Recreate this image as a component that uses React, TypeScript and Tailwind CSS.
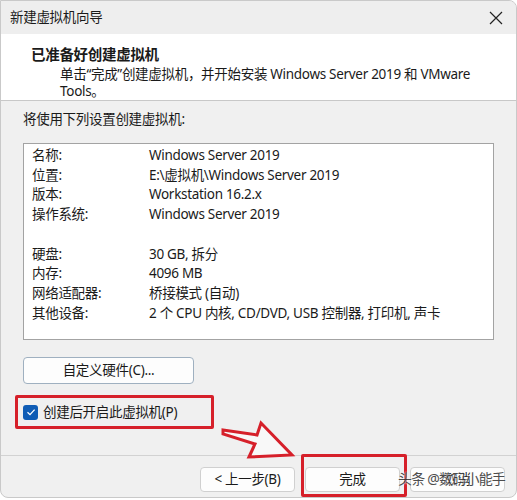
import React from "react";

const font = { fontFamily: '"Noto Sans", "Noto Sans CJK SC", sans-serif' };

const rows: [string, string][] = [
  ["名称:", "Windows Server 2019"],
  ["位置:", "E:\\虚拟机\\Windows Server 2019"],
  ["版本:", "Workstation 16.2.x"],
  ["操作系统:", "Windows Server 2019"],
  ["", ""],
  ["硬盘:", "30 GB, 拆分"],
  ["内存:", "4096 MB"],
  ["网络适配器:", "桥接模式 (自动)"],
  ["其他设备:", "2 个 CPU 内核, CD/DVD, USB 控制器, 打印机, 声卡"],
];

export default function App() {
  return (
    <div className="relative w-[517px] h-[500px] bg-white overflow-hidden text-[#1a1a1a] tracking-[-0.3px]" style={font}>
      <div className="flex flex-col w-[517px] h-[498px] border border-[#c9c9c9] rounded-b-[8px] rounded-tr-[8px] overflow-hidden bg-[#f0f0f0]">
        {/* title bar */}
        <div className="flex items-center justify-between h-[33px] shrink-0 bg-[#eeeeee] pl-[9px] pr-[12px]">
          <span className="text-[13.5px]">新建虚拟机向导</span>
          <svg width="14" height="14" viewBox="0 0 14 14" className="mr-[1px]">
            <path d="M1 1 L13 13 M13 1 L1 13" stroke="#222" strokeWidth="1.2" />
          </svg>
        </div>
        {/* header */}
        <div className="h-[67px] shrink-0 bg-white border-b border-[#c8c8c8] pl-[30px] pt-[8px]">
          <div className="text-[14.5px] font-bold leading-[24px]">已准备好创建虚拟机</div>
          <div className="pl-[29px] text-[13.5px] leading-[17px]">
            单击“完成”创建虚拟机，并开始安装 Windows Server 2019 和 VMware
            <br />
            Tools。
          </div>
        </div>
        {/* body */}
        <div className="flex-1 flex flex-col px-[22px]">
          <div className="mt-[8px] text-[13.5px] leading-[20px]">将使用下列设置创建虚拟机:</div>
          <div className="mt-[14px] h-[197px] bg-white border border-[#a3a3a3] pt-[1px] pl-[8px]">
            {rows.map((r, i) => (
              <div key={i} className="flex h-[19.75px] items-center text-[13.5px]">
                <span className="w-[117px] shrink-0">{r[0]}</span>
                <span>{r[1]}</span>
              </div>
            ))}
          </div>
          <div className="mt-[17px] w-[171px] h-[27px] rounded-[4px] border border-[#9fb0c0] bg-[#fdfdfd] flex items-center justify-center text-[13.5px]">
            自定义硬件(C)...
          </div>
          <div className="mt-[20px] flex items-center gap-[5px] h-[16px]">
            <div className="w-[15px] h-[15px] rounded-[3px] bg-[#0f5cb5] flex items-center justify-center">
              <svg width="10" height="10" viewBox="0 0 10 10">
                <path d="M1.5 5.2 L4 7.6 L8.6 2.6" stroke="white" strokeWidth="1.3" fill="none" />
              </svg>
            </div>
            <span className="text-[13.5px]">创建后开启此虚拟机(P)</span>
          </div>
        </div>
        {/* footer */}
        <div className="h-[42px] shrink-0 border-t border-[#d2d2d2] flex items-start justify-end gap-[10px] pr-[11px] pt-[11px]">
          <div className="w-[95px] h-[25px] rounded-[4px] border border-[#d0d0d0] bg-[#fdfdfd] flex items-center justify-center text-[13.5px]">
            &lt; 上一步(B)
          </div>
          <div className="w-[95px] h-[25px] rounded-[4px] border border-[#d0d0d0] bg-[#fdfdfd] flex items-center justify-center text-[13.5px]">
            完成
          </div>
          <div className="w-[95px] h-[25px] rounded-[4px] border border-[#d0d0d0] bg-[#fdfdfd] flex items-center justify-center text-[13.5px]">
            取消
          </div>
        </div>
      </div>

      {/* annotations */}
      <div className="absolute left-[15px] top-[395px] w-[199px] h-[34px] border-[3px] border-[#d6202a] rounded-[2px]" />
      <div className="absolute left-[301px] top-[454px] w-[106px] h-[43px] border-[3px] border-[#d6202a] rounded-[2px]" />
      <svg className="absolute left-0 top-0" width="517" height="500" viewBox="0 0 517 500">
        <path
          d="M223 430 L257 435 L261 423 L292 455 L249 457 L255 444 L223 434 Z"
          fill="white"
          fillOpacity="0.5"
          stroke="#d6202a"
          strokeWidth="3"
          strokeLinejoin="miter"
        />
      </svg>
      <div
        className="absolute left-[398px] top-[468px] text-[14px] text-[#3a3a3a] opacity-90 tracking-[-0.8px]"
        style={{ textShadow: "0 0 2px #fff, 0 0 2px #fff" }}
      >
        头条 @数码小能手
      </div>
    </div>
  );
}
